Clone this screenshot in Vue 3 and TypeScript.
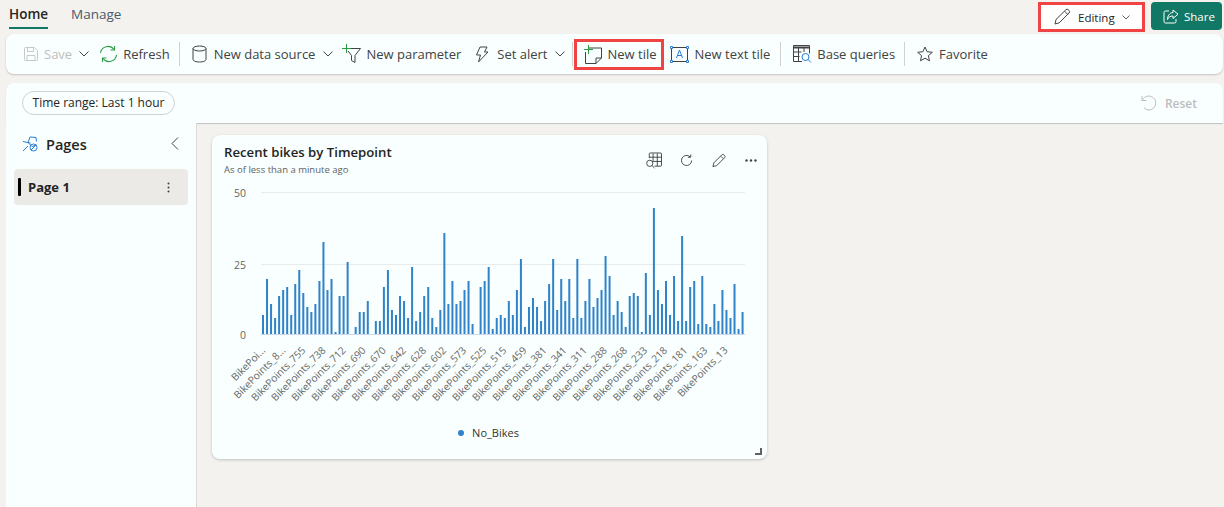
<script setup lang="ts">
// bar heights in px, read off the chart (plot baseline is at the bottom of the svg group)
const bars: number[] = [
  19, 55, 30, 16, 38, 44, 47, 19, 50, 64, 41, 27, 22, 30, 53, 92, 44, 55, 2, 38, 38, 72, 0, 7, 22, 22, 33, 0, 13, 13,
  47, 64, 24, 19, 38, 33, 16, 67, 13, 22, 38, 47, 16, 7, 24, 101, 30, 53, 30, 33, 44, 53, 10, 0, 47, 53, 67, 5, 16, 19,
  16, 33, 19, 44, 75, 7, 27, 36, 27, 13, 33, 50, 75, 24, 55, 33, 55, 16, 75, 16, 33, 55, 27, 36, 44, 78, 58, 19, 33, 22,
  7, 38, 41, 38, 2, 61, 19, 126, 44, 30, 53, 19, 58, 13, 98, 13, 47, 53, 10, 58, 10, 7, 30, 13, 44, 24, 16, 50, 5, 22,
]

const labels: string[] = [
  'BikePoi...', 'BikePoints_8...', 'BikePoints_755', 'BikePoints_738', 'BikePoints_712', 'BikePoints_690',
  'BikePoints_670', 'BikePoints_642', 'BikePoints_628', 'BikePoints_602', 'BikePoints_573', 'BikePoints_525',
  'BikePoints_515', 'BikePoints_459', 'BikePoints_381', 'BikePoints_341', 'BikePoints_311', 'BikePoints_288',
  'BikePoints_268', 'BikePoints_233', 'BikePoints_218', 'BikePoints_181', 'BikePoints_163', 'BikePoints_13',
]

const ticks = [
  { label: '50', y: 5 },
  { label: '25', y: 77 },
  { label: '0', y: 147 },
]
</script>

<template>
  <div class="page">
    <header class="top">
      <nav class="tabs">
        <span class="tab active">Home</span>
        <span class="tab">Manage</span>
      </nav>
      <div class="top-actions">
        <button class="editing">
          <svg width="18" height="18" viewBox="0 0 18 18" fill="none" stroke="#424242">
            <path d="M2 16l1-4.500L12.800 1.800a1.800 1.800 0 0 1 2.600 0l.6.600a1.800 1.800 0 0 1 0 2.600L6.300 14.800z" />
            <path d="M11.500 3.200l3.300 3.300" />
          </svg>
          <span>Editing</span>
          <svg width="8" height="5" viewBox="0 0 8 5" fill="none" stroke="#616161"><path d="M.5.5L4 4 7.500.5" /></svg>
        </button>
        <button class="share">
          <svg width="16" height="15" viewBox="0 0 16 15" fill="none" stroke="#fff">
            <path d="M6 2H2.500A1.500 1.500 0 0 0 1 3.500v9A1.500 1.500 0 0 0 2.500 14h9a1.500 1.500 0 0 0 1.500-1.500V10" />
            <path d="M10 1l5 4.200-5 4.300V7C7.500 7 5.500 8 4.500 10.500 4.500 7 6.500 3.800 10 3.500z" />
          </svg>
          <span>Share</span>
        </button>
      </div>
    </header>

    <div class="toolbar">
      <span class="tool disabled save">
        <svg width="16" height="16" viewBox="0 0 16 16" fill="none" stroke="#c8c8c8">
          <path d="M1.500 2.500a1 1 0 0 1 1-1h9l3 3v9a1 1 0 0 1-1 1h-11a1 1 0 0 1-1-1z" />
          <path d="M4.500 1.500v4h6v-4M4 14.500v-5h8v5" />
        </svg>
        <span>Save</span>
        <svg class="chev" width="10" height="6" viewBox="0 0 10 6" fill="none" stroke="#424242"><path d="M.5.5L5 5 9.500.5" /></svg>
      </span>
      <span class="tool refresh">
        <svg width="19" height="18" viewBox="0 0 19 18" fill="none" stroke="#2e9b47" stroke-width="1.100">
          <path d="M1.500 8A7.500 7.500 0 0 1 15 4.500" />
          <path d="M15.500 1v4h-4" />
          <path d="M17.500 10A7.500 7.500 0 0 1 4 13.500" />
          <path d="M3.500 17v-4h4" />
        </svg>
        <span>Refresh</span>
      </span>
      <i class="sep"></i>
      <span class="tool datasource">
        <svg width="15" height="18" viewBox="0 0 15 18" fill="none" stroke="#424242">
          <ellipse cx="7.500" cy="3.500" rx="6.500" ry="2.500" />
          <path d="M1 3.500v11c0 1.400 2.900 2.500 6.500 2.500s6.500-1.100 6.500-2.500v-11" />
        </svg>
        <span>New data source</span>
        <svg class="chev-far" width="10" height="6" viewBox="0 0 10 6" fill="none" stroke="#424242"><path d="M.5.5L5 5 9.500.5" /></svg>
      </span>
      <span class="tool param">
        <svg width="19" height="20" viewBox="0 0 19 20" fill="none">
          <path d="M5 4.500h13.500l-5.500 7v7l-3.500-2v-5L6 7" stroke="#424242" />
          <path d="M4.500 0v9M0 4.500h9" stroke="#2e9b47" />
        </svg>
        <span>New parameter</span>
      </span>
      <span class="tool alert">
        <svg width="14" height="17" viewBox="0 0 14 17" fill="none" stroke="#424242" stroke-linejoin="round">
          <path d="M5 1h7L9.500 6H13L3.500 16 5.500 9H1.500z" />
        </svg>
        <span>Set alert</span>
        <svg width="10" height="6" viewBox="0 0 10 6" fill="none" stroke="#424242"><path d="M.5.5L5 5 9.500.5" /></svg>
      </span>
      <i class="sep sep-tile"></i>
      <span class="tool new-tile">
        <svg width="18" height="19" viewBox="0 0 18 19" fill="none">
          <path d="M5 3h12.500v10L12 18.500H1.500V7" stroke="#424242" />
          <path d="M17.500 13H12v5.500" stroke="#424242" />
          <path d="M4.500 0v9M0 4.500h9" stroke="#2e9b47" />
        </svg>
        <span>New tile</span>
      </span>
      <span class="tool text-tile">
        <svg width="19" height="17" viewBox="0 0 19 17" fill="none">
          <rect x="1.500" y="1.500" width="16" height="14" stroke="#424242" />
          <path d="M6.500 12L9.500 4l3 8M7.500 9.500h4" stroke="#2b7cd3" />
          <path d="M.5.500h2v2h-2zM16.500.500h2v2h-2zM.5 14.500h2v2h-2zM16.500 14.500h2v2h-2z" fill="#fff" stroke="#2b7cd3" />
        </svg>
        <span>New text tile</span>
      </span>
      <i class="sep"></i>
      <span class="tool queries">
        <svg width="19" height="18" viewBox="0 0 19 18" fill="none">
          <path d="M9 16.500H.5V.5h16v8" stroke="#424242" />
          <path d="M.5 2.500h16" stroke="#424242" stroke-width="2" />
          <path d="M.5 7h8M.5 11.500h6M5.500 3v13.500M11 3v4" stroke="#424242" />
          <circle cx="12.500" cy="12" r="3.500" stroke="#2b7cd3" />
          <path d="M15 14.500l3 3" stroke="#2b7cd3" />
        </svg>
        <span>Base queries</span>
      </span>
      <i class="sep"></i>
      <span class="tool favorite">
        <svg width="16" height="16" viewBox="0 0 16 16" fill="none" stroke="#424242" stroke-linejoin="round">
          <path d="M8 1l2.100 4.700 5.200.6-3.900 3.400 1.100 5.100L8 12.200l-4.500 2.600 1.100-5.100L.7 6.300l5.200-.6z" />
        </svg>
        <span>Favorite</span>
      </span>
    </div>

    <div class="filters">
      <span class="pill">Time range: <b>Last 1 hour</b></span>
      <span class="reset">
        <svg width="16" height="16" viewBox="0 0 16 16" fill="none" stroke="#bdbdbd">
          <path d="M1 1v4.500h4.500" />
          <path d="M1.300 5.200A7 7 0 1 1 8.500 15 7 7 0 0 1 3 12.800" />
        </svg>
        <span>Reset</span>
      </span>
    </div>

    <main class="body">
      <aside class="sidebar">
        <div class="pages-head">
          <svg width="17" height="18" viewBox="0 0 17 18" fill="none" stroke="#2b7cd3">
            <path d="M1 16l5-5M1 6.500l7.500 1.500M8 2l-2 5.500 4 4 4.500-1.500M8 2l6 .5.500 4" />
            <circle cx="11.500" cy="12.500" r="3.500" />
            <path d="M9 15l5-5" />
          </svg>
          <span class="pages-title">Pages</span>
          <svg class="collapse" width="8" height="13" viewBox="0 0 8 13" fill="none" stroke="#424242"><path d="M7 .5L1 6.500l6 6" /></svg>
        </div>
        <div class="page-item">
          <i class="page-mark"></i>
          <span>Page 1</span>
          <svg class="page-more" width="3" height="11" viewBox="0 0 3 11" fill="#424242">
            <circle cx="1.500" cy="1.500" r="1" /><circle cx="1.500" cy="5.500" r="1" /><circle cx="1.500" cy="9.500" r="1" />
          </svg>
        </div>
      </aside>

      <section class="canvas">
        <article class="card">
          <div class="card-head">
            <div>
              <h2>Recent bikes by Timepoint</h2>
              <p>As of less than a minute ago</p>
            </div>
            <div class="card-icons">
              <svg width="16" height="17" viewBox="0 0 17 17" fill="none" stroke="#424242">
                <path d="M3.500 6V1.500a1 1 0 0 1 1-1h11a1 1 0 0 1 1 1v12a1 1 0 0 1-1 1H9" />
                <path d="M3.500 5h13M7 9.500h9.500M7.500 1v8M12 1v13.500" />
                <circle cx="4" cy="11.500" r="3.300" />
                <path d="M6.500 14l2.500 2.500" />
              </svg>
              <svg width="12" height="13" viewBox="0 0 13 13" fill="none" stroke="#424242">
                <path d="M11.500 6.500a5.500 5.500 0 1 1-1.700-4" />
                <path d="M10.500 0v3h-3" />
              </svg>
              <svg width="14" height="15" viewBox="0 0 15 15" fill="none" stroke="#424242">
                <path d="M1 14l1-4L10.500 1.500a1.500 1.500 0 0 1 2.200 0l.8.800a1.500 1.500 0 0 1 0 2.200L5 13z" />
                <path d="M9.500 3l2.500 2.500" />
              </svg>
              <svg width="12" height="3" viewBox="0 0 12 3" fill="#424242">
                <circle cx="1.500" cy="1.500" r="1.200" /><circle cx="6" cy="1.500" r="1.200" /><circle cx="10.500" cy="1.500" r="1.200" />
              </svg>
            </div>
          </div>

          <svg class="chart" width="555" height="246" viewBox="0 -6 555 246">
            <g class="ticks">
              <line x1="49" x2="533" y1="5.500" y2="5.500" />
              <line x1="49" x2="533" y1="77.500" y2="77.500" />
              <text v-for="t in ticks" :key="t.label" x="34" :y="t.y + 4.500" text-anchor="end">{{ t.label }}</text>
            </g>
            <rect
              v-for="(h, i) in bars"
              :key="i"
              :x="50 + i * 4.03"
              :y="147 - h"
              width="2"
              :height="h"
              fill="#3083c9"
            />
            <line x1="49" x2="533" y1="147.500" y2="147.500" stroke="#ccd6eb" />
            <text
              v-for="(l, i) in labels"
              :key="l"
              class="xlabel"
              text-anchor="end"
              :transform="`translate(${54 + i * 20.1} 164) rotate(-45)`"
            >{{ l }}</text>
          </svg>

          <div class="legend">
            <i class="legend-dot"></i>
            <span>No_Bikes</span>
          </div>
          <i class="resize"></i>
        </article>
      </section>
    </main>
  </div>
</template>

<style>
html,
body {
  margin: 0;
  background: #f4f2ef;
}
</style>

<style scoped>
.page {
  width: 1224px;
  height: 507px;
  overflow: hidden;
  display: flex;
  flex-direction: column;
  font-family: "Open Sans", "Noto Sans", sans-serif;
  font-size: 13px;
  color: #424242;
  background: #f4f2ef;
}

.top {
  height: 34px;
  flex: none;
  display: flex;
  justify-content: space-between;
  padding: 2px 2px 0 9px;
  box-sizing: border-box;
}

.tabs {
  display: flex;
  gap: 23px;
  font-size: 13.500px;
}

.tab {
  height: 25px;
  line-height: 25px;
  color: #4a5a6a;
}

.tab.active {
  color: #242424;
  font-weight: 600;
  border-bottom: 2px solid #117865;
}

.top-actions {
  display: flex;
  gap: 6px;
  align-items: flex-start;
}

button {
  font: inherit;
  display: flex;
  align-items: center;
  cursor: pointer;
}

.editing {
  width: 107px;
  height: 30px;
  box-sizing: border-box;
  border: 3px solid #f04444;
  background: #fff;
  color: #242424;
  font-size: 11.500px;
  padding: 0 0 0 12px;
  gap: 7px;
}

.share {
  width: 71px;
  height: 28px;
  border: 0;
  border-radius: 4px;
  background: #117865;
  color: #fff;
  font-size: 11.500px;
  padding: 0 0 0 12px;
  gap: 5px;
}

.toolbar {
  height: 40px;
  flex: none;
  margin: 0 1px 0 6px;
  padding-left: 17px;
  box-sizing: border-box;
  display: flex;
  align-items: center;
  background: #f8fffe;
  border-radius: 8px;
  box-shadow: 0 1px 2px rgba(0, 0, 0, 0.2);
}

.tool {
  display: flex;
  align-items: center;
  gap: 5px;
  white-space: nowrap;
}

.chev {
  margin-left: 2px;
}

.chev-far {
  margin-left: 1px;
}

.disabled {
  color: #bdbdbd;
}

.save {
  margin-right: 10px;
}

.sep {
  width: 1px;
  height: 24px;
  background: #d1d1d1;
  margin: 0 10px 0 9px;
}

.datasource {
  margin: 0 9px 0 2px;
  gap: 7px;
}

.param {
  margin-right: 14px;
}

.alert {
  margin-right: 7px;
  gap: 8px;
}

.sep-tile {
  margin: 0 1px 0 0;
}

.new-tile {
  width: 90px;
  height: 31px;
  flex: none;
  box-sizing: border-box;
  border: 3px solid #f04444;
  padding-left: 7px;
  margin-right: 6px;
}

.text-tile {
  gap: 5px;
  margin-right: 1px;
}

.queries {
  margin-left: 2px;
}

.favorite {
  margin-left: 2px;
  gap: 6px;
}

.filters {
  height: 40px;
  flex: none;
  margin: 9px 1px 0 6px;
  box-sizing: border-box;
  padding: 0 26px 0 16px;
  display: flex;
  align-items: center;
  justify-content: space-between;
  background: #f8fffe;
  border-radius: 8px 8px 0 0;
  box-shadow: 0 1px 1px rgba(0, 0, 0, 0.2);
}

.pill {
  height: 24px;
  line-height: 22px;
  box-sizing: border-box;
  width: 153px;
  text-align: center;
  border: 1px solid #d1d1d1;
  border-radius: 12px;
  color: #242424;
  font-size: 12px;
  white-space: nowrap;
}

.pill b {
  font-weight: 500;
}

.reset {
  display: flex;
  align-items: center;
  gap: 8px;
  color: #bdbdbd;
  font-weight: 600;
  font-size: 12px;
}

.body {
  flex: 1;
  min-height: 0;
  display: flex;
  margin-left: 6px;
}

.sidebar {
  width: 191px;
  flex: none;
  box-sizing: border-box;
  background: #f8fffe;
  border-right: 1px solid #dcdad7;
  padding: 11px 8px 0;
}

.pages-head {
  display: flex;
  align-items: center;
  height: 20px;
  padding: 0 7px 0 8px;
  gap: 7px;
}

.pages-title {
  font-size: 14.500px;
  font-weight: 600;
  color: #242424;
}

.collapse {
  margin-left: auto;
  margin-right: 2px;
  margin-bottom: 2px;
}

.page-item {
  height: 36px;
  margin-top: 15px;
  display: flex;
  align-items: center;
  gap: 7px;
  padding: 0 18px 0 4px;
  border-radius: 4px;
  background: #eceae7;
  color: #242424;
  font-weight: 700;
}

.page-mark {
  width: 3px;
  height: 18px;
  background: #000;
  border-radius: 1px;
}

.page-more {
  margin-left: auto;
}

.canvas {
  flex: 1;
  padding: 12px 15px;
}

.card {
  position: relative;
  width: 555px;
  height: 324px;
  background: #f8fffe;
  border-radius: 8px;
  box-shadow: 0 1px 3px rgba(0, 0, 0, 0.2);
}

.card-head {
  height: 46px;
  box-sizing: border-box;
  padding: 8px 10px 0 12px;
  display: flex;
  justify-content: space-between;
}

h2 {
  margin: 0;
  font-size: 13.200px;
  line-height: 18px;
  font-weight: 600;
  color: #242424;
}

p {
  margin: 0;
  padding-top: 2px;
  font-size: 9.500px;
  line-height: 14px;
  color: #616161;
}

.card-icons {
  display: flex;
  align-items: center;
  gap: 19px;
  height: 34px;
}

.chart {
  display: block;
}

.ticks line {
  stroke: #e9ebeb;
}

.ticks text {
  font-size: 10.500px;
  fill: #666;
}

.xlabel {
  font-size: 10.200px;
  fill: #666;
}

.legend {
  display: flex;
  align-items: center;
  justify-content: center;
  gap: 8px;
  font-size: 11px;
  color: #333;
  margin-top: -2px;
  margin-left: -2px;
}

.legend-dot {
  width: 6px;
  height: 6px;
  border-radius: 50%;
  background: #3083c9;
}

.resize {
  position: absolute;
  right: 5px;
  bottom: 4px;
  width: 5px;
  height: 5px;
  border-right: 2px solid #616161;
  border-bottom: 2px solid #616161;
}
</style>
